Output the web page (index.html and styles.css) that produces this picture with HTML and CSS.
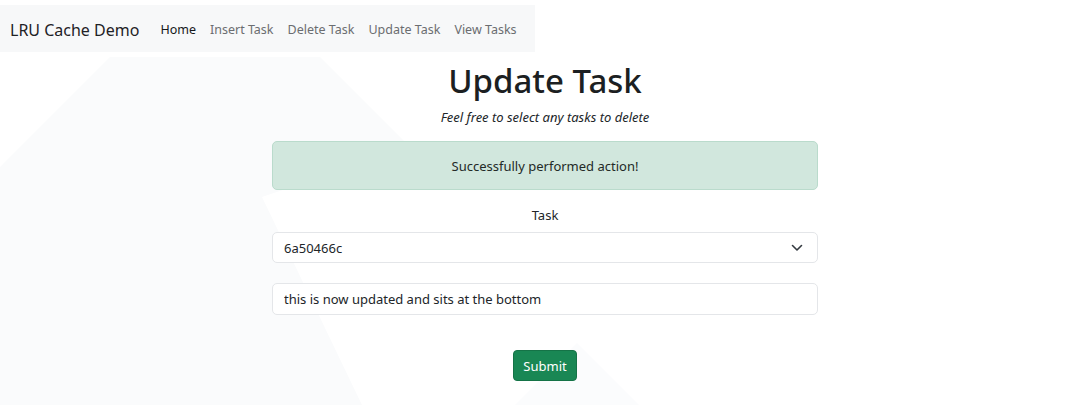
FILE: index.html
```html
<!DOCTYPE html>
<html lang="en">
<head>
<meta charset="utf-8">
<title>LRU Cache Demo - Update Task</title>
<link rel="stylesheet" href="styles.css">
</head>
<body>
<svg class="backdrop" width="1080" height="405" viewBox="0 0 1080 405" aria-hidden="true">
  <polygon points="0,167 110,57 320,57 410,147 262,197 362,405 0,405" fill="#fafbfc"/>
  <polygon points="577,343 639,405 515,405" fill="#fbfcfd"/>
</svg>
<nav class="navbar">
  <a class="brand" href="#">LRU Cache Demo</a>
  <ul class="nav-links">
    <li><a class="nav-link active" href="#">Home</a></li>
    <li><a class="nav-link" href="#">Insert Task</a></li>
    <li><a class="nav-link" href="#">Delete Task</a></li>
    <li><a class="nav-link" href="#">Update Task</a></li>
    <li><a class="nav-link" href="#">View Tasks</a></li>
  </ul>
</nav>
<main class="page">
  <div class="container">
    <h1 class="title">Update Task</h1>
    <p class="subtitle">Feel free to select any tasks to delete</p>
    <div class="alert">Successfully performed action!</div>
    <form class="form">
      <label class="label">Task</label>
      <div class="select-box">
        <span class="select-value">6a50466c</span>
        <svg class="chevron" width="12" height="8" viewBox="0 0 12 8" aria-hidden="true">
          <path d="M1.5 1.5 L6 6 L10.5 1.5" fill="none" stroke="#343a40" stroke-width="1.6" stroke-linecap="round" stroke-linejoin="round"/>
        </svg>
      </div>
      <input class="text-input" type="text" value="this is now updated and sits at the bottom">
      <div class="actions">
        <button class="btn" type="button">Submit</button>
      </div>
    </form>
  </div>
</main>
</body>
</html>
```
FILE: styles.css
```css
* {
  box-sizing: border-box;
}

html, body {
  margin: 0;
  padding: 0;
}

body {
  width: 1080px;
  height: 405px;
  overflow: hidden;
  position: relative;
  background: #ffffff;
  color: #212529;
  font-family: "Noto Sans", "Open Sans", sans-serif;
  font-size: 13px;
  line-height: 20px;
}

.backdrop {
  position: absolute;
  left: 0;
  top: 0;
  z-index: 0;
}

.navbar {
  position: relative;
  z-index: 1;
  display: flex;
  align-items: center;
  width: 535px;
  height: 47px;
  margin-top: 5px;
  padding: 3px 10px 0;
  background: #f7f8f9;
  white-space: nowrap;
}

.brand {
  flex-shrink: 0;
  font-size: 16px;
  line-height: 24px;
  color: #1f2226;
  text-decoration: none;
  margin-right: 14px;
}

.nav-links {
  display: flex;
  flex-shrink: 0;
  list-style: none;
  margin: 0;
  padding: 0;
}

.nav-link {
  display: block;
  padding: 0 7px;
  font-size: 12.5px;
  line-height: 20px;
  color: #6b6d70;
  text-decoration: none;
}

.nav-link.active {
  color: #15171a;
}

.page {
  position: relative;
  z-index: 1;
  padding-left: 10px;
}

.container {
  width: 546px;
  margin: 0 auto;
  text-align: center;
}

.title {
  margin: 9px 0 0;
  font-size: 33px;
  line-height: 40px;
  font-weight: 500;
  color: #1c1f22;
}

.subtitle {
  margin: 6px 0 0;
  font-style: italic;
  font-size: 13px;
  line-height: 20px;
}

.alert {
  margin-top: 14px;
  height: 49px;
  display: flex;
  align-items: center;
  justify-content: center;
  background: #d1e7dd;
  border: 1px solid #badbcc;
  border-radius: 5px;
  color: #232a27;
}

.form {
  display: flex;
  flex-direction: column;
  margin: 0;
}

.label {
  display: block;
  margin-top: 15px;
  line-height: 20px;
}

.select-box {
  margin-top: 7px;
  height: 31px;
  display: flex;
  align-items: center;
  justify-content: space-between;
  padding: 0 14px 0 11px;
  background: #ffffff;
  border: 1px solid #e4e6e9;
  border-radius: 5px;
  text-align: left;
}

.select-value {
  line-height: 20px;
}

.chevron {
  display: block;
}

.text-input {
  margin-top: 20px;
  height: 32px;
  width: 100%;
  padding: 0 11px;
  background: #ffffff;
  border: 1px solid #e4e6e9;
  border-radius: 5px;
  font-family: "Noto Sans", "Open Sans", sans-serif;
  font-size: 13px;
  color: #212529;
  outline: none;
}

.actions {
  display: flex;
  justify-content: center;
  margin-top: 35px;
}

.btn {
  width: 64px;
  height: 31px;
  padding: 0;
  background: #198754;
  border: 1px solid #157347;
  border-radius: 4px;
  color: #ffffff;
  font-family: "Noto Sans", "Open Sans", sans-serif;
  font-size: 13px;
  line-height: 20px;
  cursor: pointer;
}
```
